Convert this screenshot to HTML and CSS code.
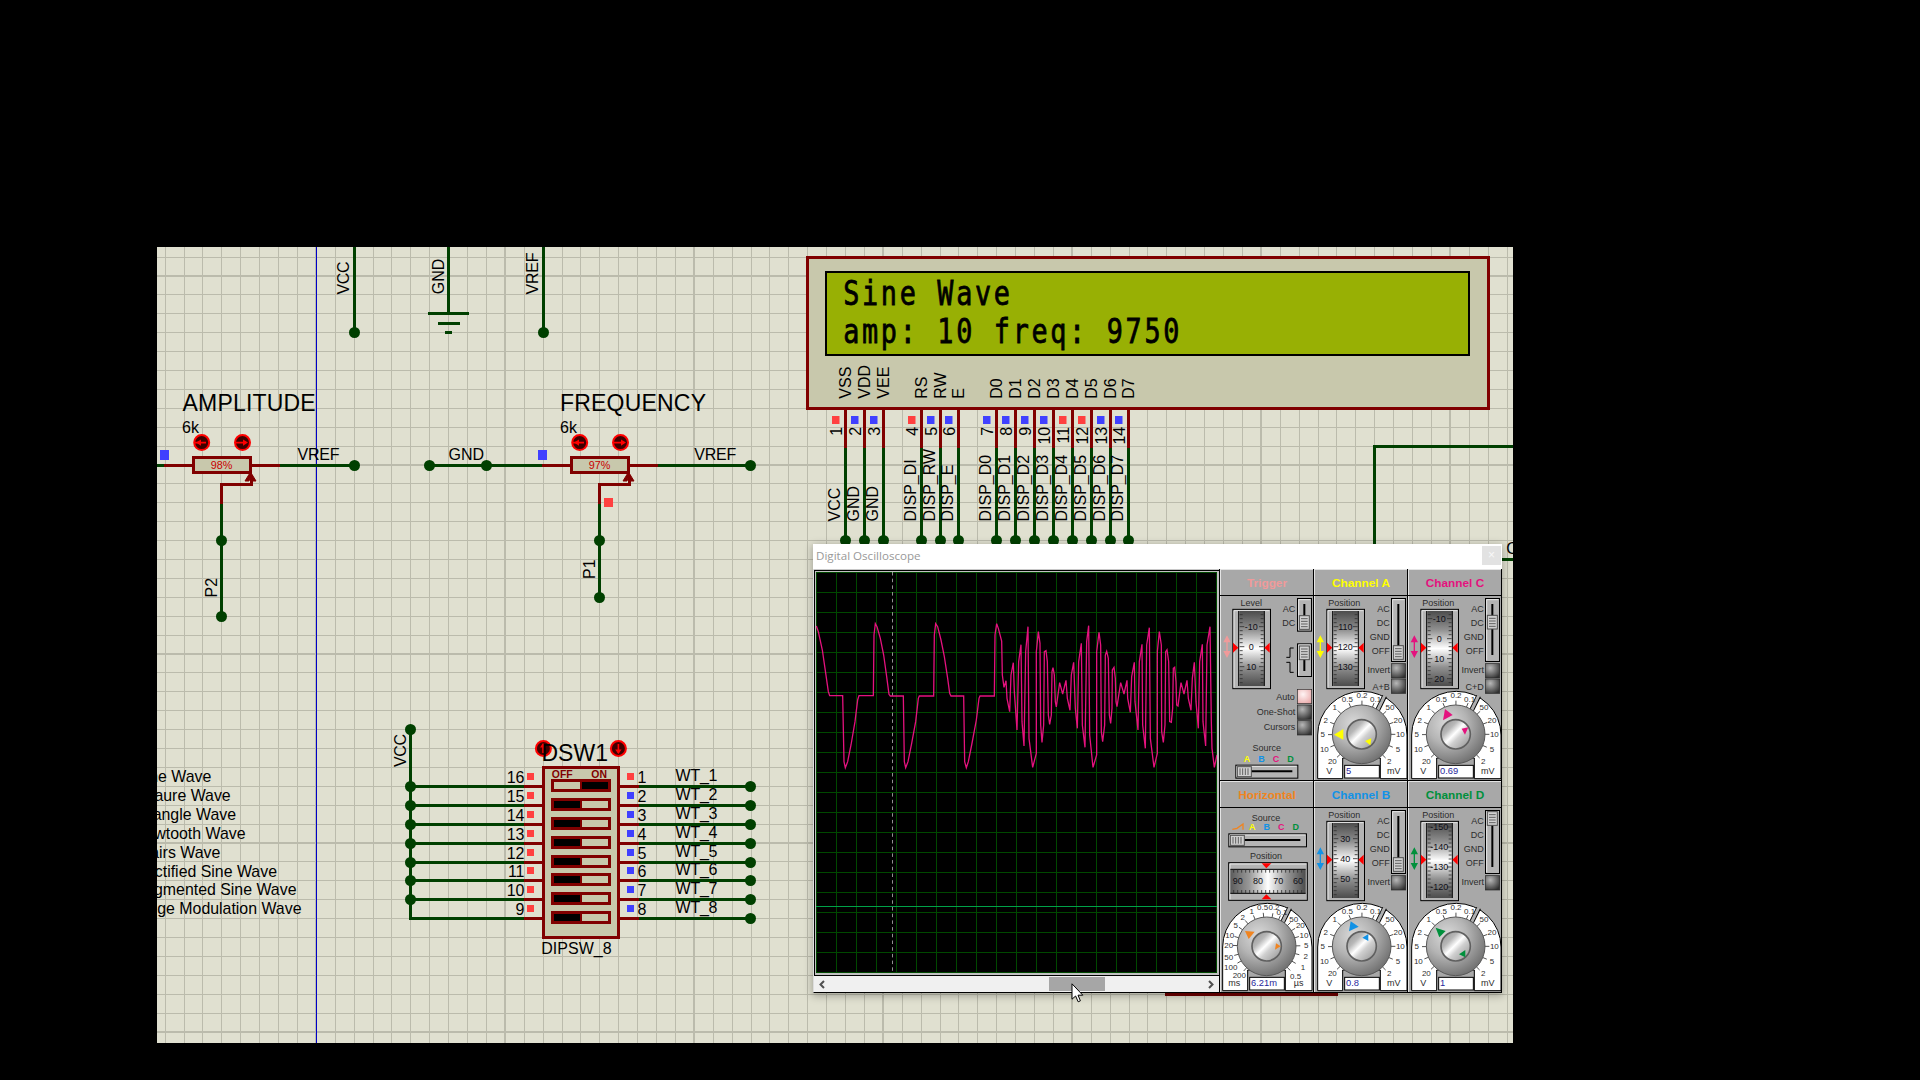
FILE: index.html
```html
<!DOCTYPE html>
<html lang="en">
<head>
<meta charset="utf-8">
<title>Function generator simulation</title>
<link rel="stylesheet" href="styles.css">
</head>
<body>
<main class="workspace">
  <svg class="schematic" viewBox="157 247 1356 796" width="1356" height="796">
    <defs>
      <pattern id="grid" x="316" y="276" width="189" height="189" patternUnits="userSpaceOnUse">
        <path class="grid-minor" d="M19.5 0V189M38.5 0V189M57.5 0V189M75.5 0V189M94.5 0V189M113.5 0V189M132.5 0V189M151.5 0V189M170.5 0V189M0 18.5H189M0 37.5H189M0 56.5H189M0 75.5H189M0 94.5H189M0 113.5H189M0 132.5H189M0 151.5H189M0 170.5H189"/>
        <path class="grid-major" d="M0 0V189M189 0V189M0 0H189M0 189H189"/>
      </pattern>
      <g id="pot">
        <path class="pin" d="M164 465.5H280M221.5 503.5V484.5H251.5V475"/>
        <path class="pin-head" d="M250.5 472L256 481H252.5L250.5 477L249 481H245Z"/>
        <rect class="body" x="193.5" y="457.5" width="57" height="15"/>
        <circle class="knob-button" cx="201.7" cy="442.6" r="7.5"/>
        <circle class="knob-button" cx="242.5" cy="442.6" r="7.5"/>
        <path class="knob-arrow" d="M194 442.6H206M235 442.6H246"/>
        <path class="knob-arrow-head" d="M196 442.6L201 439.4V445.8ZM248 442.6L243 439.4V445.8Z"/>
      </g>
    </defs>
    <rect class="paper" x="157" y="247" width="1356" height="796"/>
    <rect fill="url(#grid)" x="157" y="247" width="1356" height="796"/>
    <path class="sheet-edge" d="M316.5 247V1043"/>

    <g class="label">
      <text transform="translate(349 294.5) rotate(-90)" textLength="33">VCC</text>
      <text transform="translate(443.8 294.3) rotate(-90)">GND</text>
      <text transform="translate(538.2 294.5) rotate(-90)" textLength="42">VREF</text>
      <text transform="translate(217.3 597.5) rotate(-90)">P2</text>
      <text transform="translate(595 579) rotate(-90)">P1</text>
      <text transform="translate(406 767) rotate(-90)" textLength="33">VCC</text>
      <text x="297.5" y="460" textLength="42">VREF</text>
      <text x="448.5" y="460">GND</text>
      <text x="694.3" y="460" textLength="42">VREF</text>
      <text x="182" y="433">6k</text>
      <text x="560" y="433">6k</text>
      <text x="541.3" y="954">DIPSW_8</text>
      <text x="1506.3" y="554">C</text>
    </g>

    <path class="wire" d="M354.5 247V332.5M448.5 247V313.5M428 313.5H469M438 323.5H460M445 332.5H452M543.5 247V332.5
      M157 465.5H164M280 465.5H354.5M221.5 503.5V616.5M429.5 465.5H542M658 465.5H750.5M599.5 503.5V597.5
      M410.5 729.5V920M1374.5 545V446.5H1513M1500 559.5H1513"/>
    <g class="node">
      <circle cx="354.5" cy="332.5" r="5.5"/><circle cx="543.5" cy="332.5" r="5.5"/>
      <circle cx="354.5" cy="465.5" r="5.5"/><circle cx="429.5" cy="465.5" r="5.5"/>
      <circle cx="486.5" cy="465.5" r="5.5"/><circle cx="750.5" cy="465.5" r="5.5"/>
      <circle cx="221.5" cy="540.5" r="5.5"/><circle cx="221.5" cy="616.5" r="5.5"/>
      <circle cx="599.5" cy="540.5" r="5.5"/><circle cx="599.5" cy="597.5" r="5.5"/>
      <circle cx="410.5" cy="729.5" r="5.5"/>
    </g>
    <use href="#pot"/><use href="#pot" x="378"/>
    <rect class="low" x="160" y="450" width="9" height="10"/>
    <rect class="low" x="538" y="450" width="9" height="10"/>
    <rect class="high" x="604" y="498" width="9" height="9"/>
    <g class="title"><text x="182.6" y="411" textLength="133">AMPLITUDE</text><text x="560" y="411" textLength="146">FREQUENCY</text></g>
    <g class="percent"><text x="221.5" y="469">98%</text><text x="599.5" y="469">97%</text></g>

    <g class="note">
      <text x="211.3" y="782">ne Wave</text>
      <text x="230.7" y="801">aure Wave</text>
      <text x="236" y="820">angle Wave</text>
      <text x="245.5" y="839">wtooth Wave</text>
      <text x="220.3" y="858">airs Wave</text>
      <text x="277" y="877">ctified Sine Wave</text>
      <text x="296.5" y="895">gmented Sine Wave</text>
      <text x="301.5" y="914">nge Modulation Wave</text>
    </g>

    <circle class="knob-button" cx="543.4" cy="748.5" r="7.5"/>
    <circle class="knob-button" cx="618.4" cy="748.5" r="7.5"/>
    <path class="knob-arrow" d="M543 753V744M618.4 744V753"/>
    <path class="knob-arrow-head" d="M543 743L546 747.5H540ZM618.4 754L615.2 749.5H621.6Z"/>
    <rect class="body" x="543.5" y="767.5" width="75" height="170"/>
    <g id="dip"></g>
    <g class="title"><text x="541.5" y="761">DSW1</text></g>
    <g class="switch-label"><text x="551.8" y="777.8">OFF</text><text x="591.3" y="777.8">ON</text></g>

    <rect class="body" x="807.5" y="257.5" width="681" height="151"/>
    <rect class="lcd" x="826" y="272" width="643" height="83"/>
    <g class="lcd-text">
      <text transform="translate(843.2 305) scale(.8 1)" xml:space="preserve">Sine Wave</text>
      <text transform="translate(843.2 342.8) scale(.8 1)" xml:space="preserve">amp: 10 freq: 9750</text>
    </g>
    <g id="lcd-pins"></g>
    <rect class="lower-part" x="1165" y="993" width="173" height="3"/>
  </svg>

  <section class="scope">
    <header class="titlebar">
      <span class="caption">Digital Oscilloscope</span>
      <span class="close">×</span>
    </header>
    <div class="scope-body">
      <div class="viewport">
        <div class="screen">
          <svg viewBox="816 572 401 401" width="401" height="401">
            <defs>
              <pattern id="graticule" x="816" y="572" width="20" height="20" patternUnits="userSpaceOnUse">
                <path class="graticule" d="M.5 0V20M0 .5H20"/>
              </pattern>
            </defs>
            <rect fill="url(#graticule)" x="816" y="572" width="401" height="401"/>
            <path class="time-zero" d="M892.5 572V972"/>
            <path class="trace-d" d="M816 906.5H1217"/>
            <path class="trace-c" transform="translate(805 535) scale(.33333)" d="M34 273L40 290L52 345L60 400L70 470L74 482H113L117 680L121 698L128 680L138 630L150 560L158 495L162 482H205L207 300L211 266L216 275L226 310L236 360L245 425L252 478L256 483H295L298 680L302 698L309 680L320 625L332 560L340 490L343 483H386L388 300L392 266L398 275L408 315L418 365L428 430L434 475L438 483H476L479 680L484 698L490 680L500 630L514 555L522 490L525 483H568L570 300L575 266L580 280L590 318L592 420L597 457L603 437L606 490L614 530L618 420L625 383L628 470L636 585L641 380L648 329L651 560L657 633L662 350L669 275L672 610L683 697L694 655V350L700 290L705 325L707 570L711 622L716 570L718 350L723 347L727 380L730 540L734 568L739 540L741 410L744 398L748 420L751 500L754 516L764 443L773 477L783 436L787 490L795 526L799 420L806 382L811 520L817 580L821 380L829 325L832 570L840 637L845 320L851 272L854 600L864 697L875 660V350L882 292L887 330L889 590L893 620L899 570L901 360L905 349L910 370L913 540L917 565L921 520L922 405L927 397L931 430L933 500L936 515L947 443L957 477L966 436L968 490L976 532L980 425L988 382L990 500L999 585L1003 380L1011 328L1013 570L1021 640L1025 330L1033 278L1036 610L1047 697L1057 655V350L1063 290L1069 330L1070 590L1075 622L1080 570L1082 350L1086 344L1091 380L1094 560L1099 562L1103 520L1105 400L1109 397L1113 440L1115 510L1119 513L1128 443L1137 477L1146 436L1150 490L1158 526L1162 430L1168 382L1173 500L1180 580L1184 380L1192 328L1194 560L1202 633L1206 330L1215 275L1219 560L1221 640L1228 697L1236 660"/>
          </svg>
        </div>
        <div class="scrollbar">
          <svg class="chevron" viewBox="0 0 8 9" width="8" height="9"><path d="M6 1L2.5 4.5L6 8"/></svg>
          <span class="track"><span class="thumb"></span></span>
          <svg class="chevron" viewBox="0 0 8 9" width="8" height="9"><path d="M2 1L5.5 4.5L2 8"/></svg>
        </div>
      </div>
      <div class="modules">
        <article class="module trigger"><h2>Trigger</h2><svg id="trigger" viewBox="15 93 282 555" width="94" height="185"></svg></article>
        <article class="module ch-a"><h2>Channel A</h2><svg id="ch-a" viewBox="12 93 282 555" width="94" height="185"></svg></article>
        <article class="module ch-c"><h2>Channel C</h2><svg id="ch-c" viewBox="12 93 282 555" width="94" height="185"></svg></article>
        <article class="module horizontal"><h2>Horizontal</h2><svg id="horizontal" viewBox="15 99 282 555" width="94" height="185"></svg></article>
        <article class="module ch-b"><h2>Channel B</h2><svg id="ch-b" viewBox="12 93 282 555" width="94" height="185"></svg></article>
        <article class="module ch-d"><h2>Channel D</h2><svg id="ch-d" viewBox="12 93 282 555" width="94" height="185"></svg></article>
      </div>
    </div>
  </section>

  <svg class="pointer" viewBox="0 0 13 20" width="13" height="20">
    <path d="M1 .8V16.2L4.6 13L7.2 18.8L9.4 17.8L7 12.2H11.8Z"/>
  </svg>
</main>

<svg class="shared-defs" width="0" height="0">
  <defs>
    <linearGradient id="drum" x1="0" y1="0" x2="0" y2="1">
      <stop offset="0" stop-color="#4c4c4c"/><stop offset=".25" stop-color="#909090"/><stop offset=".5" stop-color="#fff"/><stop offset=".75" stop-color="#909090"/><stop offset="1" stop-color="#4c4c4c"/>
    </linearGradient>
    <linearGradient id="drum-h">
      <stop offset="0" stop-color="#5c5c5c"/><stop offset=".25" stop-color="#989898"/><stop offset=".5" stop-color="#fff"/><stop offset=".75" stop-color="#989898"/><stop offset="1" stop-color="#4c4c4c"/>
    </linearGradient>
    <radialGradient id="dome" cx=".36" cy=".32" r=".75">
      <stop offset="0" stop-color="#dadada"/><stop offset=".45" stop-color="#b4b4b4"/><stop offset="1" stop-color="#6c6c6c"/>
    </radialGradient>
    <linearGradient id="cap" x1="0" y1="0" x2="1" y2="1">
      <stop offset="0" stop-color="#8c8c8c"/><stop offset=".3" stop-color="#b8b8b8"/><stop offset=".47" stop-color="#fff"/><stop offset=".6" stop-color="#d0d0d0"/><stop offset="1" stop-color="#8c8c8c"/>
    </linearGradient>
    <radialGradient id="push" cx=".35" cy=".3" r=".8">
      <stop offset="0" stop-color="#b8b8b8"/><stop offset="1" stop-color="#303030"/>
    </radialGradient>
    <radialGradient id="push-lit" cx=".4" cy=".35" r=".8">
      <stop offset="0" stop-color="#fff4f4"/><stop offset="1" stop-color="#e8a4a4"/>
    </radialGradient>
  </defs>
</svg>
<script src="script.js"></script>
</body>
</html>
```

FILE: styles.css
```css
body {
  margin: 0;
  background: #000;
  font-family: "Liberation Sans", Arial, sans-serif;
}

.workspace {
  position: relative;
  width: 1356px;
  height: 796px;
  margin: 247px 0 0 157px;
  overflow: hidden;
}

.shared-defs { position: absolute; }

/* Schematic sheet */
.schematic { display: block; font-size: 16px; }
.paper { fill: #e0e0d0; }
.grid-minor { stroke: #bbbbac; fill: none; shape-rendering: crispEdges; }
.grid-major { stroke: #bbbbac; stroke-width: 2; fill: none; shape-rendering: crispEdges; }
.sheet-edge { stroke: #0000c8; shape-rendering: crispEdges; }
.wire { stroke: #004000; stroke-width: 3; fill: none; shape-rendering: crispEdges; }
.node { fill: #004000; }
.pin { stroke: #800000; stroke-width: 3; fill: none; shape-rendering: crispEdges; }
.pin-head { fill: #800000; stroke: #800000; }
.body { fill: #c8c8ac; stroke: #800000; stroke-width: 3; shape-rendering: crispEdges; }
.knob-button { fill: #400000; stroke: #f00; stroke-width: 2; }
.knob-arrow { fill: none; stroke: #f00; stroke-width: 1.6; }
.knob-arrow-head { fill: #f00; }
.low { fill: #4040ff; }
.high { fill: #ff4040; }
.title { font-size: 23px; }
.percent { font-size: 10.8px; fill: #c80000; text-anchor: middle; }
.note { text-anchor: end; font-size: 15.9px; }
.end { text-anchor: end; }
.switch-label { font-size: 10.4px; font-weight: bold; fill: #800000; }
.slot { fill: #c8c8ac; stroke: #800000; stroke-width: 3; }
.slot-divider { stroke: #800000; stroke-width: 2; }
.lcd { fill: #98b004; stroke: #000; stroke-width: 2; }
.lcd-text {
  font: 33.5px "DejaVu Sans Mono", monospace;
  letter-spacing: 3.37px;
  white-space: pre;
  stroke: #000;
  stroke-width: .8;
}
.lower-part { fill: #700000; }

/* Oscilloscope window */
.scope {
  position: absolute;
  left: 656px;
  top: 297px;
  width: 689px;
  height: 449px;
  display: flex;
  flex-direction: column;
  background: #c8c8c8;
  box-shadow: 0 2px 8px 1px rgba(0, 0, 0, .28);
}
.titlebar {
  display: flex;
  justify-content: space-between;
  align-items: flex-start;
  height: 25px;
  padding: 0 1px 0 3px;
  box-sizing: border-box;
  background: #fff;
}
.caption { font: 11.6px/24px "Open Sans", "Noto Sans", sans-serif; color: #999; }
.close {
  width: 19px;
  height: 19px;
  margin-top: 2px;
  background: #e2e2e2;
  color: #f8f8f8;
  font-size: 12px;
  line-height: 19px;
  text-align: center;
}
.scope-body { display: flex; height: 424px; }
.viewport {
  width: 407px;
  box-sizing: border-box;
  border: 1px solid #000;
  border-left-color: #ddd;
  border-top: 0;
}
.screen {
  height: 406px;
  padding: 1px 0 0 1px;
  box-sizing: border-box;
  border-top: 1px solid #000;
  border-left: 1px solid #000;
  border-bottom: 1px solid #000;
  margin-top: 1px;
  background: #c0c0c0;
}
.screen svg { display: block; background: #000; border: 0; }
.graticule { stroke: #004800; shape-rendering: crispEdges; }
.time-zero { stroke: #909090; stroke-dasharray: 3.5 3.2; }
.trace-d { stroke: #00a048; shape-rendering: crispEdges; }
.trace-c { fill: none; stroke: #e4127e; stroke-width: 3.9; }
.scrollbar { display: flex; align-items: center; height: 16px; padding: 0 4px; background: #f0f0f0; }
.track { flex: 1; height: 14px; padding-left: 223px; }
.thumb { display: block; width: 56px; height: 14px; background: #a6a6a6; }
.chevron path { fill: none; stroke: #505050; stroke-width: 2; }

.modules {
  flex: 1;
  display: grid;
  grid-template-columns: repeat(3, 94px);
  grid-template-rows: repeat(2, 212px);
}
.module {
  display: flex;
  flex-direction: column;
  box-shadow: inset -1px -1px #000, inset 1px 1px #e4e4e4;
  background: #a8a8a8;
}
.module h2 {
  height: 26px;
  margin: 0;
  border-bottom: 1px solid #000;
  font-size: 11.8px;
  line-height: 29px;
  text-align: center;
}
.module svg { display: block; font-size: 27px; }
.trigger { color: #f09a9a; }
.horizontal { color: #f08420; }
.ch-a { color: #ffff00; }
.ch-b { color: #1292e6; }
.ch-c { color: #e4127e; }
.ch-d { color: #00903c; }

.caption-text { fill: #2c2c2c; }
.mid { text-anchor: middle; }
.frame { fill: #b4b4b4; stroke: #000; stroke-width: 3; }
.frame-light { fill: none; stroke: #e8e8e8; stroke-width: 3; }
.hairline { fill: none; stroke: #000; stroke-width: 3; }
.tick { fill: none; stroke: #303030; stroke-width: 2.5; }
.drum-number { fill: #101018; text-anchor: middle; }
.red-mark { fill: #f00; }
.accent { fill: currentColor; }
.accent-line { fill: none; stroke: currentColor; stroke-width: 4; }
.groove { stroke: #000; stroke-width: 6; }
.grip { fill: #d0d0d0; stroke: #505050; stroke-width: 3; }
.grip-lines { stroke: #606060; stroke-width: 3; }
.push-edge { stroke: #282828; stroke-width: 2; }
.dial { fill: #fff; stroke: #000; stroke-width: 3; }
.dial-number { font-size: 24px; fill: #303030; text-anchor: middle; }
.gap-edge { stroke: #000; stroke-width: 15; }
.gap { stroke: #b0b0b0; stroke-width: 9; }
.cap-edge { stroke: #606060; stroke-width: 5; }
.readout { fill: #fff; stroke: #000; stroke-width: 3; }
.value { font-size: 28px; fill: #28289c; }
.source { font-weight: bold; text-anchor: middle; }
.src-a { fill: #ff0; }
.src-b { fill: #1292e6; }
.src-c { fill: #e4127e; }
.src-d { fill: #00903c; }

.pointer { position: absolute; left: 914px; top: 736px; }
.pointer path { fill: #fff; stroke: #000; }
```

FILE: script.js
```js
const put = (id, markup) => { document.getElementById(id).innerHTML = markup; };

/* DIP switch: eight rows, only the first one is on */
const rows = [786.5, 805.5, 824.5, 843.5, 862.5, 880.5, 899.5, 918.5];
put('dip', rows.map((y, i) => `
  <path class="wire" d="M410.5 ${y}H524M639 ${y}H750.5"/>
  <path class="pin" d="M524 ${y}H542M620 ${y}H639"/>
  <g class="node">${i < 7 ? `<circle cx="410.5" cy="${y}" r="5.5"/>` : ''}<circle cx="750.5" cy="${y}" r="5.5"/></g>
  <rect class="high" x="527" y="${y - 13.5}" width="7" height="7"/>
  <rect class="${i ? 'low' : 'high'}" x="627" y="${y - 13.5}" width="7" height="7"/>
  <text class="end" x="524.5" y="${y - 3.3}">${16 - i}</text>
  <text x="637.5" y="${y - 3.3}">${i + 1}</text>
  <text x="675.5" y="${y - 5.5}" textLength="42">WT_${i + 1}</text>
  <rect class="slot" x="552.5" y="${y - 6}" width="57" height="10"/>
  <rect x="${i ? 554 : 582}" y="${y - 4.5}" width="26" height="7"/>
  <path class="slot-divider" d="M581 ${y - 6}V${y + 4}"/>`).join(''));

/* LCD connector: x, pin number, pin name, net, level */
const pins = [
  [845.5, 1, 'VSS', 'VCC', 1], [864.5, 2, 'VDD', 'GND', 0], [883.5, 3, 'VEE', 'GND', 0],
  [921.5, 4, 'RS', 'DISP_DI', 1], [940.5, 5, 'RW', 'DISP_RW', 0], [958.5, 6, 'E', 'DISP_E', 0],
  [996.5, 7, 'D0', 'DISP_D0', 0], [1015.5, 8, 'D1', 'DISP_D1', 0], [1034.5, 9, 'D2', 'DISP_D2', 0],
  [1053.5, 10, 'D3', 'DISP_D3', 0], [1072.5, 11, 'D4', 'DISP_D4', 1], [1091.5, 12, 'D5', 'DISP_D5', 1],
  [1110.5, 13, 'D6', 'DISP_D6', 0], [1128.5, 14, 'D7', 'DISP_D7', 0],
];
put('lcd-pins', pins.map(([x, n, name, net, level]) => `
  <path class="pin" d="M${x} 410V448"/>
  <path class="wire" d="M${x} 448V541"/>
  <circle class="node" cx="${x}" cy="540.5" r="5.5"/>
  <rect class="${level ? 'high' : 'low'}" x="${x - 13.5}" y="416" width="7.5" height="8"/>
  <text transform="translate(${x + 5.4} 398.7) rotate(-90)">${name}</text>
  <text class="end" transform="translate(${x - 3.4} 426.8) rotate(-90)">${n}</text>
  <text transform="translate(${x - 5.3} 521.5) rotate(-90)">${net}</text>`).join(''));

/* Oscilloscope controls */
const caption = (x, y, t, anchor = 'end') => `<text class="caption-text ${anchor}" x="${x}" y="${y}">${t}</text>`;
const push = (x, y, lit) => `<rect class="push-edge" x="${x}" y="${y}" width="43" height="43" fill="url(#${lit ? 'push-lit' : 'push'})"/>`;
const arrows = x => `<path class="accent-line" d="M${x} 225V265"/><path class="accent" d="M${x} 211L${x + 11} 232H${x - 11}ZM${x} 279L${x + 11} 258H${x - 11}Z"/>`;

function drum(x, numbers) {
  let ticks = '';
  const phase = numbers[0][0];
  for (let y = phase - 60; y < 363; y += 12) {
    if (y > 142) {
      const long = Math.abs((y - phase) % 60) < 1 ? 14 : 9;
      ticks += `M${x + 22} ${y}h${long}M${x + 94} ${y}h-${long}`;
    }
  }
  return `<rect class="frame" x="${x + 1.5}" y="133" width="113" height="238"/>
    <path class="frame-light" d="M${x + 5} 368V137H${x + 111}"/>
    <rect fill="url(#drum)" x="${x + 21}" y="138" width="74" height="225"/>
    <path class="hairline" d="M${x + 19} 138V363M${x + 96} 138V363"/>
    <path class="tick" d="${ticks}"/>
    ${numbers.map(([y, t]) => `<text class="drum-number" x="${x + 57}" y="${y + 10}">${t}</text>`).join('')}
    <path class="red-mark" d="M${x + 2} 233L${x + 18} 248L${x + 2} 263ZM${x + 112} 233L${x + 96} 248L${x + 112} 263Z"/>`;
}

function slider(x, y, h, thumb, from, to) {
  return `<rect class="frame" x="${x + 1.5}" y="${y + 1.5}" width="42" height="${h - 3}"/>
    <path class="frame-light" d="M${x + 5} ${y + h - 5}V${y + 5}H${x + 40}"/>
    <path class="groove" d="M${x + 22} ${from}V${to}"/>
    <rect class="grip" x="${x + 7}" y="${thumb}" width="30" height="41"/>
    <path class="grip-lines" d="M${x + 12} ${thumb + 9}h20m-20 8h20m-20 8h20m-20 8h20"/>`;
}

function sliderH(x, y, w, from, to) {
  return `<rect class="frame" x="${x + 1.5}" y="${y + 1.5}" width="${w - 3}" height="39"/>
    <path class="frame-light" d="M${x + 5} ${y + 36}V${y + 5}H${x + w - 5}"/>
    <path class="groove" d="M${from} ${y + 20}H${to}"/>
    <rect class="grip" x="${x + 6}" y="${y + 6}" width="42" height="30"/>
    <path class="grip-lines" d="M${x + 14} ${y + 11}v20m8 -20v20m8 -20v20m8 -20v20"/>`;
}

function knob(cy, labels, units, value, big, small) {
  let ticks = '';
  for (const [x, y] of labels) {
    const a = Math.atan2(y - cy - 3, x - 155);
    const c = Math.cos(a), s = Math.sin(a);
    ticks += `M${155 + 86 * c} ${cy + 3 + 86 * s}L${155 + 101 * c} ${cy + 3 + 101 * s}`;
  }
  const b = cy + 136;
  return `<path class="dial" d="M23 ${b}V${cy + 5}A134 131 0 0 1 291 ${cy + 5}V${b}H211V${b - 62}H98V${b}Z"/>
    <path class="gap-edge" d="M203 ${cy - 70}L224 ${cy - 112}"/><path class="gap" d="M203 ${cy - 70}L224 ${cy - 113}"/>
    <path class="tick" d="${ticks}"/>
    <circle fill="url(#dome)" stroke="#585858" stroke-width="3" cx="155" cy="${cy + 3}" r="88"/>
    <circle class="cap-edge" fill="url(#cap)" cx="155" cy="${cy + 3}" r="44"/>
    ${labels.map(([x, y, t]) => `<text class="dial-number" x="${x}" y="${y + 8}">${t}</text>`).join('')}
    ${caption(58, cy + 121, units[0], 'mid')}${caption(251, cy + 121, units[1], 'mid')}
    <rect class="readout" x="104" y="${b - 40}" width="104" height="38"/>
    <text class="value" x="108" y="${b - 14}">${value}</text>
    <path class="accent" d="M${big}Z"/><path class="accent" d="M${small}Z"/>`;
}

const voltScale = [[197, 402, '0.1'], [156, 391, '0.2'], [112, 402, '0.5'], [74, 427, '1'], [47, 467, '2'], [38, 509, '5'],
  [43, 553, '10'], [67, 590, '20'], [240, 428, '50'], [264, 467, '20'], [271, 508, '10'], [264, 553, '5'], [238, 590, '2']];

function channel(id, numbers, thumb, sum, value, big, small) {
  put(id, arrows(31) + caption(103, 122, 'Position', 'mid') + drum(49, numbers)
    + ['AC', 'DC', 'GND', 'OFF'].map((t, i) => caption(239, 140 + 42 * i, t)).join('')
    + slider(243, 99, 192, thumb, 117, 270)
    + caption(240, 323, 'Invert') + push(244, 296)
    + (sum ? caption(239, 374, sum) + push(244, 342) : '')
    + knob(505, voltScale, ['V', 'mV'], value, big, small));
}
channel('ch-a', [[185, '110'], [245, '120'], [306, '130']], 242, 'A+B', '5', '72 509L100 492V524', '165 528L184 520L181 541');
channel('ch-c', [[161, '-10'], [221, '0'], [282, '10'], [342, '20']], 151, 'C+D', '0.69', '123 432L146 450L117 466', '173 491L193 487L183 509');
channel('ch-b', [[185, '30'], [245, '40'], [306, '50']], 242, '', '0.8', '122 433L146 449L117 463', '157 482L175 471V492');
channel('ch-d', [[150, '-150'], [209, '-140'], [269, '-130'], [329, '-120']], 104, '', '1', '95 452L125 462L106 481', '165 532L184 519V541');

const sources = (x, y) => 'ABCD'.split('').map((t, i) =>
  `<text class="source src-${t.toLowerCase()}" x="${x + 43.5 * i}" y="${y}">${t}</text>`).join('');

put('trigger', arrows(36) + caption(109, 122, 'Level', 'mid') + drum(52, [[185, '-10'], [245, '0'], [306, '10']])
  + caption(241, 140, 'AC') + caption(241, 182, 'DC')
  + slider(246, 99, 101, 152, 117, 160) + slider(246, 235, 101, 243, 270, 318)
  + '<path class="hairline" d="M214 277H225V249H236M214 292H225V322H236"/>'
  + caption(239, 404, 'Auto') + caption(241, 449, 'One-Shot') + caption(241, 496, 'Cursors')
  + push(247, 373, true) + push(247, 420) + push(247, 467)
  + caption(155, 557, 'Source', 'mid') + sources(96, 590) + sliderH(61, 599, 189, 108, 232));

const timeScale = [[143, 396, '0.5'], [177, 397, '0.2'], [201, 411, '0.1'], [110, 409, '1'], [83, 427, '2'], [62, 450, '5'],
  [44, 480, '10'], [41, 511, '20'], [41, 546, '50'], [47, 576, '100'], [73, 602, '200'],
  [236, 433, '50'], [256, 450, '20'], [267, 480, '10'], [274, 512, '5'], [272, 544, '2'], [264, 578, '1'], [242, 603, '0.5']];
let marks = '';
for (let x = 56; x < 270; x += 12) marks += `M${x} 284v9M${x} 354v-9`;
put('horizontal', caption(153, 138, 'Source', 'mid')
  + '<path class="accent-line" d="M52 163L66 160L84 147V164"/>' + sources(112, 165) + sliderH(40, 175, 236, 88, 256)
  + caption(153, 251, 'Position', 'mid')
  + '<rect class="frame" x="41" y="263" width="236" height="113"/><path class="frame-light" d="M45 373V267H274"/>'
  + '<rect fill="url(#drum-h)" x="46" y="284" width="226" height="71"/><path class="hairline" d="M46 283H272M46 355H272"/>'
  + `<path class="tick" d="${marks}"/>`
  + [[68, 90], [129, 80], [190, 70], [249, 60]].map(([x, t]) => `<text class="drum-number" x="${x}" y="327">${t}</text>`).join('')
  + '<path class="red-mark" d="M140 265H169L154 280ZM140 373H169L154 358Z"/>'
  + knob(511, timeScale, ['ms', 'µs'], '6.21m', '90 468L119 470L101 492', '183 505L197 514L180 524'));
```
